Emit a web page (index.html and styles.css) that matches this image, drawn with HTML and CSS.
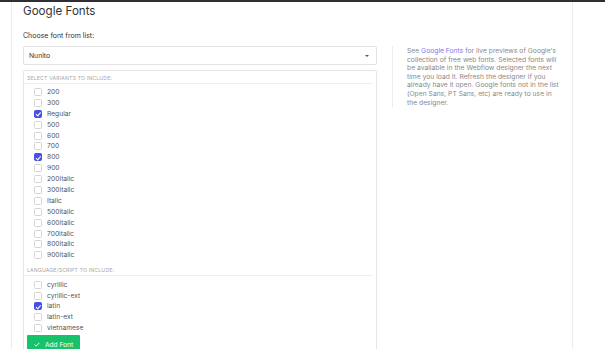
FILE: index.html
```html
<!DOCTYPE html>
<html>
<head>
<meta charset="utf-8">
<link rel="stylesheet" href="styles.css">
</head>
<body>
<div class="topbar"></div>
<div class="page">
  <h1 class="title">Google Fonts</h1>
  <div class="label">Choose font from list:</div>
  <div class="cols">
    <div class="left">
      <div class="select"><span>Nunito</span><span class="arrow"></span></div>
      <div class="box">
        <div class="sec-head">Select variants to include:</div>
        <ul class="list">
          <li><span class="cb"></span>200</li>
          <li><span class="cb"></span>300</li>
          <li><span class="cb on"></span>Regular</li>
          <li><span class="cb"></span>500</li>
          <li><span class="cb"></span>600</li>
          <li><span class="cb"></span>700</li>
          <li><span class="cb on"></span>800</li>
          <li><span class="cb"></span>900</li>
          <li><span class="cb"></span>200italic</li>
          <li><span class="cb"></span>300italic</li>
          <li><span class="cb"></span>Italic</li>
          <li><span class="cb"></span>500italic</li>
          <li><span class="cb"></span>600italic</li>
          <li><span class="cb"></span>700italic</li>
          <li><span class="cb"></span>800italic</li>
          <li><span class="cb"></span>900italic</li>
        </ul>
        <div class="sec-head">Language/script to include:</div>
        <ul class="list list2">
          <li><span class="cb"></span>cyrillic</li>
          <li><span class="cb"></span>cyrillic-ext</li>
          <li><span class="cb on"></span>latin</li>
          <li><span class="cb"></span>latin-ext</li>
          <li><span class="cb"></span>vietnamese</li>
        </ul>
        <button class="btn"><svg width="6" height="5" viewBox="0 0 6 5"><path d="M0.6 2.6 L2.2 4.1 L5.4 0.8" fill="none" stroke="#fff" stroke-width="1"/></svg>Add Font</button>
      </div>
    </div>
    <div class="right">
      <p class="info">See <a href="#">Google Fonts</a> for live previews of Google's collection of free web fonts. Selected fonts will be available in the Webflow designer the next time you load it. Refresh the designer if you already have it open. Google fonts not in the list (Open Sans, PT Sans, etc) are ready to use in the designer.</p>
    </div>
  </div>
</div>
</body>
</html>
```
FILE: styles.css
```css
html, body { margin: 0; padding: 0; background: #fff; }
body { font-family: Inter, "Noto Sans", sans-serif; color: #444; font-size: 6.6px; height: 349px; overflow: hidden; }
.topbar { height: 2px; background: #2e2e33; }
.page {
  margin-left: 11px;
  width: 562px;
  border-left: 1px solid #ececec;
  border-right: 1px solid #ececec;
  padding: 0 11px;
  box-sizing: border-box;
  height: 347px;
  overflow: hidden;
}
.title { margin: 0; padding-top: 1px; font-size: 11.6px; font-weight: 400; color: #333; line-height: 17px; height: 28px; }
.label { font-size: 7px; line-height: 10px; color: #333; height: 15px; }
.cols { display: flex; }
.left { width: 354px; flex: none; }
.select {
  height: 19px; border: 1px solid #e2e2e2; border-radius: 2px; box-sizing: border-box;
  display: flex; align-items: center; justify-content: space-between; padding: 0 6px 0 5px;
  font-size: 6.8px; color: #333;
}
.arrow { width: 0; height: 0; border-left: 2.2px solid transparent; border-right: 2.2px solid transparent; border-top: 2.4px solid #555; margin-right: 1px; }
.box { margin-top: 5px; border: 1px solid #e6e6e6; border-radius: 2px; height: 300px; box-sizing: border-box; }
.sec-head {
  font-size: 5.2px; text-transform: uppercase; letter-spacing: 0.15px; color: #a8a8a8;
  line-height: 8px; padding: 3px 3px 1px; border-bottom: 1px solid #efefef; margin-right: 3px;
}
.list { list-style: none; margin: 0; padding: 2.5px 0 0 10px; }
.list + .sec-head { margin-top: 5px; padding-top: 0; }
.list2 { padding-top: 3.5px; }
.list li { height: 10.9px; display: flex; align-items: center; color: #555; font-size: 6.7px; }
.cb { width: 8px; height: 8px; box-sizing: border-box; border: 1px solid #d4d4d4; border-radius: 1.5px; margin-right: 5px; background: #fff; position: relative; }
.cb.on { background: #4650e8; border-color: #4650e8; }
.cb.on::after {
  content: ""; position: absolute; left: 2.2px; top: 0.6px; width: 1.6px; height: 3.6px;
  border-right: 1px solid #fff; border-bottom: 1px solid #fff; transform: rotate(40deg);
}
.btn {
  margin: 1px 0 0 3px; height: 20px; width: 53px; border: 0; border-radius: 1px;
  background: #17c26b; color: #fff; font-family: inherit; font-size: 6.6px;
  display: flex; align-items: center; justify-content: center; gap: 5px; padding: 0;
}
.right { margin-left: 15px; border-left: 1px solid #ececec; padding-left: 14px; width: 152px; height: 61px; box-sizing: content-box; }
.info { margin: 0; padding-top: 1px; font-size: 6.75px; line-height: 8.6px; color: #8a8a8a; }
.info a { color: #7a7af0; text-decoration: none; }
```
